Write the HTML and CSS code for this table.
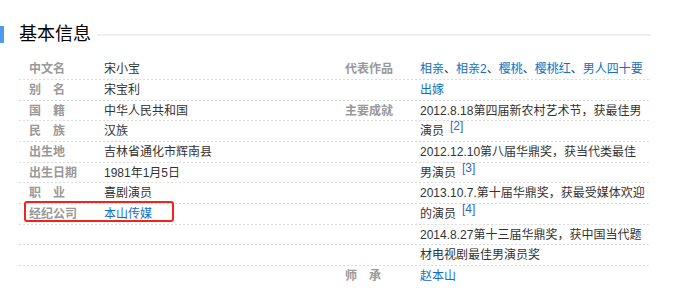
FILE: index.html
```html
<!DOCTYPE html>
<html lang="zh-CN">
<head>
  <meta charset="UTF-8" />
  <title>宋小宝 - 基本信息</title>
  <link rel="stylesheet" href="styles.css">
</head>
<body>
  <div class="para-title">
    <span class="mark"></span>
    <h2>基本信息</h2>
    <span class="rule"></span>
  </div>

  <div class="basic-info">
    <dl class="col">
      <div class="item"><dt>中文名</dt><dd>宋小宝</dd></div>
      <div class="item"><dt>别　名</dt><dd>宋宝利</dd></div>
      <div class="item"><dt>国　籍</dt><dd>中华人民共和国</dd></div>
      <div class="item"><dt>民　族</dt><dd>汉族</dd></div>
      <div class="item"><dt>出生地</dt><dd>吉林省通化市辉南县</dd></div>
      <div class="item"><dt>出生日期</dt><dd>1981年1月5日</dd></div>
      <div class="item"><dt>职　业</dt><dd>喜剧演员</dd></div>
      <div class="item marked">
        <dt>经纪公司</dt><dd><a href="#">本山传媒</a></dd>
        <span class="highlight"></span>
      </div>
      <div class="item"></div>
      <div class="item"></div>
    </dl>

    <dl class="col">
      <div class="item"><dt>代表作品</dt><dd><a href="#">相亲</a>、<a href="#">相亲2</a>、<a href="#">樱桃</a>、<a href="#">樱桃红</a>、<a href="#">男人四十要</a></dd></div>
      <div class="item"><dt></dt><dd><a href="#">出嫁</a></dd></div>
      <div class="item"><dt>主要成就</dt><dd>2012.8.18第四届新农村艺术节，获最佳男</dd></div>
      <div class="item"><dt></dt><dd>演员<sup class="ref"><a href="#">[2]</a></sup></dd></div>
      <div class="item"><dt></dt><dd>2012.12.10第八届华鼎奖，获当代类最佳</dd></div>
      <div class="item"><dt></dt><dd>男演员<sup class="ref"><a href="#">[3]</a></sup></dd></div>
      <div class="item"><dt></dt><dd>2013.10.7.第十届华鼎奖，获最受媒体欢迎</dd></div>
      <div class="item"><dt></dt><dd>的演员<sup class="ref"><a href="#">[4]</a></sup></dd></div>
      <div class="item"><dt></dt><dd>2014.8.27第十三届华鼎奖，获中国当代题</dd></div>
      <div class="item"><dt></dt><dd>材电视剧最佳男演员奖</dd></div>
      <div class="item last"><dt>师　承</dt><dd><a href="#">赵本山</a></dd></div>
    </dl>
  </div>
</body>
</html>
```

FILE: styles.css
```css
body {
  margin: 0;
  font-family: "Liberation Sans", "Noto Sans CJK SC", sans-serif;
  font-size: 12px;
  color: #333;
  background: #fff;
}

a {
  color: #136ec2;
  text-decoration: none;
}

/* section heading */
.para-title {
  display: flex;
  align-items: center;
  width: 651px;
  height: 17px;
  margin-top: 26px;
}

.para-title .mark {
  width: 4px;
  height: 17px;
  background-color: #4f9cee;
}

.para-title h2 {
  margin: 0 0 0 15px;
  font-size: 18px;
  font-weight: normal;
  line-height: 17px;
  color: #000;
}

.para-title .rule {
  flex: 1;
  height: 2px;
  margin-left: 6px;
  background-color: #f0f0f0;
}

/* two-column info table */
.basic-info {
  display: flex;
  width: 632px;
  margin: 16.33px 0 0 19px;
}

.basic-info .col {
  width: 316px;
  margin: 0;
}

.basic-info .item {
  display: flex;
  height: 20.67px;
  line-height: 20.67px;
  padding-left: 10px;
  white-space: nowrap;
  background: linear-gradient(to right, #dcdcdc 50%, transparent 50%) left bottom / 4px 1px repeat-x;
}

.basic-info .item.last {
  background: none;
}

.basic-info dt {
  width: 75px;
  flex-shrink: 0;
  font-weight: bold;
  color: #999;
}

.basic-info dd {
  margin: 0;
}

.ref {
  margin-left: 6px;
  font-size: 12px;
  line-height: 0;
  vertical-align: 5px;
}

.ref a {
  color: #3366cc;
}

/* red annotation frame */
.marked {
  position: relative;
}

.highlight {
  position: absolute;
  top: -3px;
  left: 5px;
  width: 150px;
  height: 21px;
  box-sizing: border-box;
  border: 2px solid #f2231b;
  border-radius: 3px;
}
```
